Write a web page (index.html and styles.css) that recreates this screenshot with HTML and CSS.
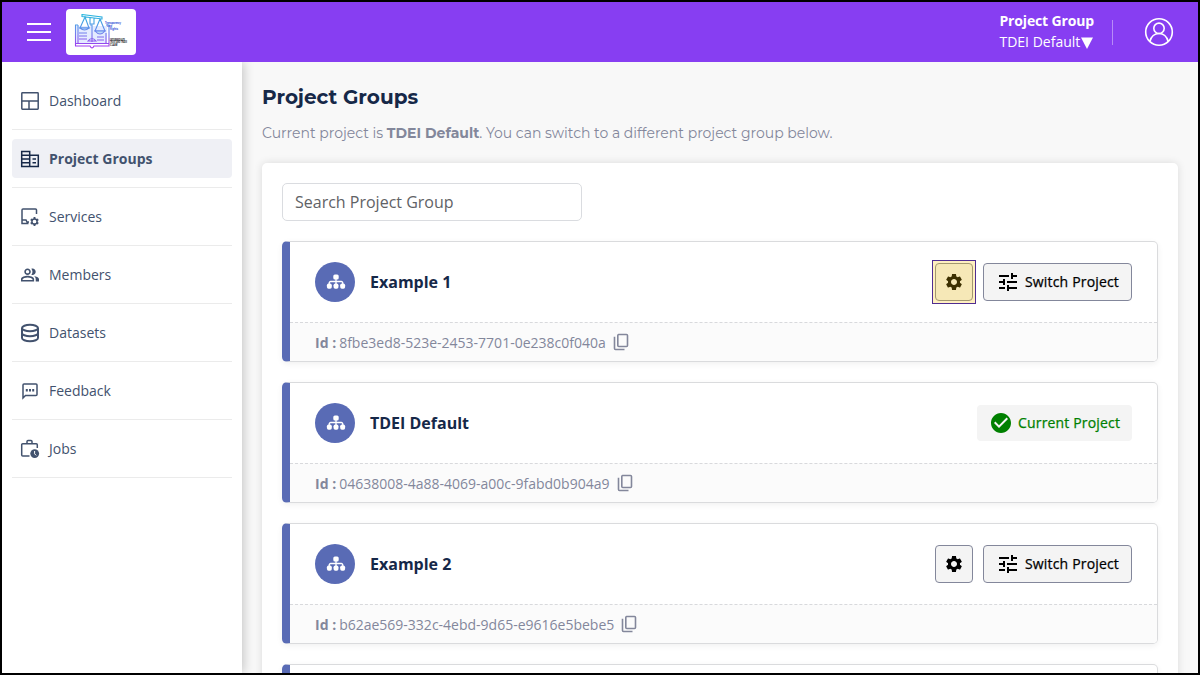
FILE: index.html
```html
<!DOCTYPE html>
<html lang="en">
<head>
<meta charset="utf-8">
<title>Project Groups</title>
<link rel="stylesheet" href="styles.css">
</head>
<body>
<svg class="defs" aria-hidden="true">
  <symbol id="sitemap" viewBox="0 0 20 16"><rect x="7.300" y="0.500" width="5.400" height="5" rx="1.600"/><path d="M10 5v5M3.200 10.500V9a1.500 1.500 0 0 1 1.500-1.500h10.600A1.500 1.500 0 0 1 16.800 9v1.500" fill="none" stroke="#fff" stroke-width="1.300"/><rect x="0.900" y="9.500" width="4.900" height="5.300" rx="1.700"/><rect x="7.550" y="9.500" width="4.900" height="5.300" rx="1.700"/><rect x="14.200" y="9.500" width="4.900" height="5.300" rx="1.700"/></symbol>
  <symbol id="copy" viewBox="0 0 16 18"><path d="M5.200 1.500h8.300a1 1 0 0 1 1 1v10a1 1 0 0 1-1 1H5.800a1 1 0 0 1-1-1v-10a1 1 0 0 1 1-1zM1.500 3.800v11.700a1 1 0 0 0 1 1H11.500" fill="none" stroke="#83879b" stroke-width="1.600"/></symbol>
  <symbol id="tune" viewBox="0 0 24 24"><path d="M3 17v2h6v-2H3zM3 5v2h10V5H3zm10 16v-2h8v-2h-8v-2h-2v6h2zM7 9v2H3v2h4v2h2V9H7zm14 4v-2H11v2h10zm-6-4h2V7h4V5h-4V3h-2v6z"/></symbol>
  <symbol id="gear" viewBox="0 0 24 24"><path d="M19.140 12.940c.04-.3.06-.61.06-.94 0-.32-.02-.64-.07-.94l2.030-1.580c.18-.14.23-.41.12-.61l-1.920-3.320c-.12-.22-.37-.29-.59-.22l-2.390.96c-.5-.38-1.030-.7-1.620-.94l-.36-2.540c-.04-.24-.24-.41-.48-.41h-3.840c-.24 0-.43.17-.47.41l-.36 2.540c-.59.24-1.130.57-1.620.94l-2.390-.96c-.22-.08-.47 0-.59.22L2.740 8.870c-.12.21-.08.47.12.61l2.030 1.580c-.05.3-.09.63-.09.94s.02.64.07.94l-2.030 1.580c-.18.14-.23.41-.12.61l1.920 3.320c.12.22.37.29.59.22l2.390-.96c.5.38 1.030.7 1.620.94l.36 2.540c.05.24.24.41.48.41h3.840c.24 0 .44-.17.47-.41l.36-2.540c.59-.24 1.130-.56 1.620-.94l2.390.96c.22.08.47 0 .59-.22l1.920-3.320c.12-.22.07-.47-.12-.61l-2.010-1.580zM12 15.600c-1.980 0-3.600-1.620-3.600-3.600s1.620-3.600 3.600-3.600 3.600 1.620 3.600 3.600-1.620 3.600-3.600 3.600z"/></symbol>
</svg>
<div class="app">
  <header class="topbar">
    <div class="burger"><i></i><i></i><i></i></div>
    <div class="logo">
      <svg width="70" height="46" viewBox="0 0 70 46" fill="none">
        <defs><linearGradient id="lg" x1="0" y1="5" x2="0" y2="40" gradientUnits="userSpaceOnUse"><stop offset="0" stop-color="#22b8dc"/><stop offset=".5" stop-color="#6d86ec"/><stop offset="1" stop-color="#a62df0"/></linearGradient></defs>
        <path d="M10 17h31v18H10z" fill="#e4ebff"/>
        <g stroke="url(#lg)" stroke-width="1.100">
          <path d="M16 5.500l20 2.500v2L16 7.500zM24 9v6h4V9.500M19 8l-5 11h9zM34 10l-5 12h10z"/>
          <path d="M14 19q4.500 4 9 0zM29 22q5 6 10 0z" fill="#b9dcf8"/>
          <path d="M12 16H9.500v21H24q2 4 4 0h15V16h-3M24 16h2v17M12 34V16M40 24v10M10 34.500h33M22 32q4-5 8 0z"/>
          <path d="M13 24h8M13 27h8M13 30h8M31 28h7M31 31h7"/>
        </g>
        <g font-family="Open Sans, sans-serif" font-weight="700" font-size="2.600"><g fill="#4057d8"><text x="39" y="14.500" textLength="16">Transparency</text><text x="41" y="17.500">Law</text><text x="44" y="20.500" textLength="8">Rights</text></g><g fill="#222"><text x="44" y="31.500" textLength="15" lengthAdjust="spacingAndGlyphs">INTERMEDIATE</text><text x="44" y="34.200" textLength="17" lengthAdjust="spacingAndGlyphs">TRUST AND TRADE</text><text x="44" y="36.900">CLAW</text></g></g>
      </svg>
    </div>
    <div class="picker"><b>Project Group</b><span>TDEI Default<svg width="12" height="12" viewBox="0 0 12 12"><path d="M0 .5h12L6 12z" fill="#fff"/></svg></span></div>
    <div class="divider"></div>
    <svg class="user" width="30" height="30" viewBox="0 0 30 30" fill="none" stroke="#fff" stroke-width="1.600"><circle cx="15" cy="15" r="13.300"/><circle cx="15" cy="11.300" r="5.200"/><path d="M5.800 24.500c1.500-5.300 4.800-8 9.200-8s7.700 2.700 9.200 8"/></svg>
  </header>
  <div class="body">
    <nav class="sidebar">
      <div class="item"><a><svg viewBox="0 0 20 20" class="line"><rect x="1.800" y="1.800" width="16.400" height="16.400" rx=".6"/><path d="M2 10h16M9 10v8"/></svg>Dashboard</a></div>
      <div class="item"><a class="active"><svg viewBox="0 0 20 20" class="line"><path d="M1.700 2.500h8v15h-8zM1.700 6.200h8M1.700 10h8M1.700 13.700h8M9.700 6.200h8.600v11.300H9.700M12.500 10h3.500M12.500 13.700h3.500"/></svg>Project Groups</a></div>
      <div class="item"><a><svg viewBox="0 0 20 20" class="line"><path d="M16.500 7V3a1 1 0 0 0-1-1h-12.500a1 1 0 0 0-1 1v13.500h6.500M2 13h4l1 2h2"/><circle cx="14.500" cy="14.500" r="2.600"/><path d="M14.500 10v2M14.500 17v2M10.700 12.300l1.600.9M16.700 15.800l1.600.9M10.700 16.700l1.600-.9M16.700 13.200l1.600-.9" stroke-width="1.900"/></svg>Services</a></div>
      <div class="item"><a><svg viewBox="1 1 22 22"><path d="M16.670 13.130C18.040 14.060 19 15.320 19 17v3h4v-3c0-2.180-3.570-3.470-6.330-3.870zM15 12c2.210 0 4-1.790 4-4s-1.790-4-4-4c-.47 0-.91.1-1.330.24C14.500 5.270 15 6.580 15 8s-.5 2.730-1.330 3.760c.42.14.86.24 1.330.24zM9 12c2.210 0 4-1.790 4-4s-1.790-4-4-4-4 1.790-4 4 1.790 4 4 4zm0-6c1.100 0 2 .9 2 2s-.9 2-2 2-2-.9-2-2 .9-2 2-2zm0 7c-2.670 0-8 1.340-8 4v3h16v-3c0-2.660-5.330-4-8-4zm6 5H3v-.99C3.200 16.290 6.300 15 9 15s5.800 1.290 6 2v1z"/></svg>Members</a></div>
      <div class="item"><a><svg viewBox="0 0 20 20" class="line db"><ellipse cx="10" cy="5" rx="8" ry="3.200"/><path d="M2 5v10c0 1.800 3.600 3.200 8 3.200s8-1.400 8-3.200V5M2 10c0 1.800 3.600 3.200 8 3.200s8-1.400 8-3.200"/></svg>Datasets</a></div>
      <div class="item"><a><svg viewBox="0 0 20 20" class="line"><path d="M3 17V4a1 1 0 0 1 1-1h12a1 1 0 0 1 1 1v9.500a1 1 0 0 1-1 1H5.500z"/><path d="M5.800 9.200h2M9 9.200h2M12.200 9.200h2" stroke-width="2.400"/></svg>Feedback</a></div>
      <div class="item"><a><svg viewBox="0 0 20 20" class="line"><path d="M9.500 17H2.700a1 1 0 0 1-1-1V5.800a1 1 0 0 1 1-1h13.600a1 1 0 0 1 1 1V9M7 4.800V2.500a1 1 0 0 1 1-1h3a1 1 0 0 1 1 1v2.300"/><circle cx="14.700" cy="14.600" r="4.400" fill="#42526e" stroke="none"/><path d="M14.600 12v2.800l1.600 1.600" stroke="#fff" stroke-width="1"/></svg>Jobs</a></div>
    </nav>
    <main class="content">
      <h1>Project Groups</h1>
      <p class="lead">Current project is <b>TDEI Default</b>. You can switch to a different project group below.</p>
      <section class="panel">
        <input class="search" placeholder="Search Project Group">
        <article class="card">
          <div class="main"><span class="avatar"><svg width="20" height="16"><use href="#sitemap"/></svg></span><h2>Example 1</h2>
            <div class="actions"><button class="gear marked"><svg width="20" height="20"><use href="#gear"/></svg></button><button class="switch"><svg width="24" height="24"><use href="#tune"/></svg><span>Switch Project</span></button></div></div>
          <div class="foot"><b>Id :</b><span>8fbe3ed8-523e-2453-7701-0e238c0f040a</span><svg width="16" height="18"><use href="#copy"/></svg></div>
        </article>
        <article class="card">
          <div class="main"><span class="avatar"><svg width="20" height="16"><use href="#sitemap"/></svg></span><h2>TDEI Default</h2>
            <div class="actions"><div class="current"><svg width="24" height="24" viewBox="0 0 24 24"><path fill="#008000" d="M12 2C6.480 2 2 6.480 2 12s4.480 10 10 10 10-4.480 10-10S17.520 2 12 2zm-2 15-5-5 1.410-1.410L10 14.170l7.590-7.590L19 8l-9 9z"/></svg><span>Current Project</span></div></div></div>
          <div class="foot"><b>Id :</b><span>04638008-4a88-4069-a00c-9fabd0b904a9</span><svg width="16" height="18"><use href="#copy"/></svg></div>
        </article>
        <article class="card">
          <div class="main"><span class="avatar"><svg width="20" height="16"><use href="#sitemap"/></svg></span><h2>Example 2</h2>
            <div class="actions"><button class="gear"><svg width="20" height="20"><use href="#gear"/></svg></button><button class="switch"><svg width="24" height="24"><use href="#tune"/></svg><span>Switch Project</span></button></div></div>
          <div class="foot"><b>Id :</b><span>b62ae569-332c-4ebd-9d65-e9616e5bebe5</span><svg width="16" height="18"><use href="#copy"/></svg></div>
        </article>
        <article class="card"><div class="main"></div></article>
      </section>
    </main>
  </div>
</div>
</body>
</html>
```
FILE: styles.css
```css
* { box-sizing: border-box; }
body { margin: 0; font-family: "Open Sans", sans-serif; font-size: 14px; color: #162848; }
svg { display: block; flex: none; }
.defs { display: none; }
.app { width: 1200px; height: 675px; border: 2px solid #000; overflow: hidden; display: flex; flex-direction: column; background: #f8f8f8; }
.topbar { height: 60px; flex: none; background: #873ef2; display: flex; align-items: center; padding: 0 24px 0 25px; color: #fff; }
.burger { width: 24px; display: flex; flex-direction: column; gap: 6px; }
.burger i { height: 2px; background: #fff; }
.logo { width: 70px; height: 46px; background: #fff; border-radius: 4px; margin-left: 15px; }
.picker { margin-left: auto; padding-bottom: 2px; display: flex; flex-direction: column; line-height: 21px; }
.picker b { font-weight: 700; letter-spacing: -.15px; }
.picker span { display: flex; align-items: center; gap: 1px; }
.picker svg { margin-top: 3px; }
.divider { width: 1px; height: 25px; background: #b78bf7; margin: 0 31px 0 18px; }
.body { display: flex; flex: 1; min-height: 0; }
.sidebar { width: 240px; flex: none; background: #fff; box-shadow: 2px 0 10px rgba(0,0,0,.2); padding: 10px 10px 0; clip-path: inset(0 -20px 0 0); }
.item { height: 58px; border-bottom: 1px solid #ebebeb; display: flex; align-items: center; }
.item a { display: flex; align-items: center; gap: 9px; width: 220px; height: 39px; padding-left: 8px; color: #42526e; border-radius: 4px; }
.item svg { width: 20px; height: 20px; fill: #42526e; }
.item svg:not(.line) { width: 18px; height: 18px; margin: 0 1px; }
.item .line { fill: none; stroke: #42526e; stroke-width: 1.5; }
.item .db { stroke-width: 2; }
.item .active { background: #eff0f5; font-weight: 700; }
.active .line { stroke: #162848; }
.content { flex: 1; padding: 21px 20px 0; display: flex; flex-direction: column; }
h1, .lead { font-family: Montserrat, "Open Sans", sans-serif; margin: 0; white-space: nowrap; }
h1 { font-size: 20px; line-height: 28px; font-weight: 700; }
.lead { font-size: 14px; line-height: 20px; margin-top: 12px; color: #83879b; }
.panel { margin-top: 20px; flex: none; height: 600px; background: #fff; border-radius: 5px; box-shadow: 0 0 8px rgba(0,0,0,.12); padding: 20px; display: flex; flex-direction: column; gap: 20px; }
.search { width: 300px; height: 38px; flex: none; border: 1px solid #dadce0; border-radius: 5px; padding: 0 12px; font: 16px "Open Sans", sans-serif; }
.search::placeholder { color: #5f6266; opacity: 1; }
.card { height: 121px; flex: none; border: 1px solid #dadbdd; border-left: 8px solid #596bb5; border-radius: 5px; box-shadow: 0 2px 6px rgba(0,0,0,.06); overflow: hidden; }
.main { height: 80px; display: flex; align-items: center; padding: 0 25px; position: relative; z-index: 0; }
.avatar { width: 40px; height: 40px; border-radius: 50%; background: #596bb5; display: flex; align-items: center; justify-content: center; padding-left: 1px; fill: #fff; }
h2 { font-size: 16px; line-height: 24px; font-weight: 700; margin: 0 0 0 15px; }
.actions { margin-left: auto; display: flex; gap: 10px; }
button { font: 500 14px "Open Sans", sans-serif; height: 38px; border: 1px solid #83879b; border-radius: 4px; background: #f4f4f4; color: #000; display: flex; align-items: center; padding: 0; }
.gear { width: 38px; justify-content: center; }
.marked { background: #f6e8b7; border-color: #a29770; fill: #3d3000; position: relative; }
.marked::before { content: ""; position: absolute; inset: -4px; border: 1px solid #502d91; box-shadow: inset 0 0 0 3px #fff0c0; z-index: -1; }
.switch { width: 149px; gap: 5px; padding-left: 12px; }
.switch span, .current span { letter-spacing: .17px; -webkit-text-stroke: .25px currentColor; margin-bottom: 2px; }
.current { width: 155px; height: 36px; border-radius: 4px; background: #f4f4f4; color: #008000; font-weight: 500; display: flex; align-items: center; gap: 5px; padding-left: 12px; }
.foot { height: 39px; border-top: 1px dashed #d8d9dc; background: #fbfbfb; color: #83879b; display: flex; align-items: center; padding-left: 25px; }
.foot span { margin-left: 3px; }
.foot svg { margin: 0 0 1px 7px; }
```
